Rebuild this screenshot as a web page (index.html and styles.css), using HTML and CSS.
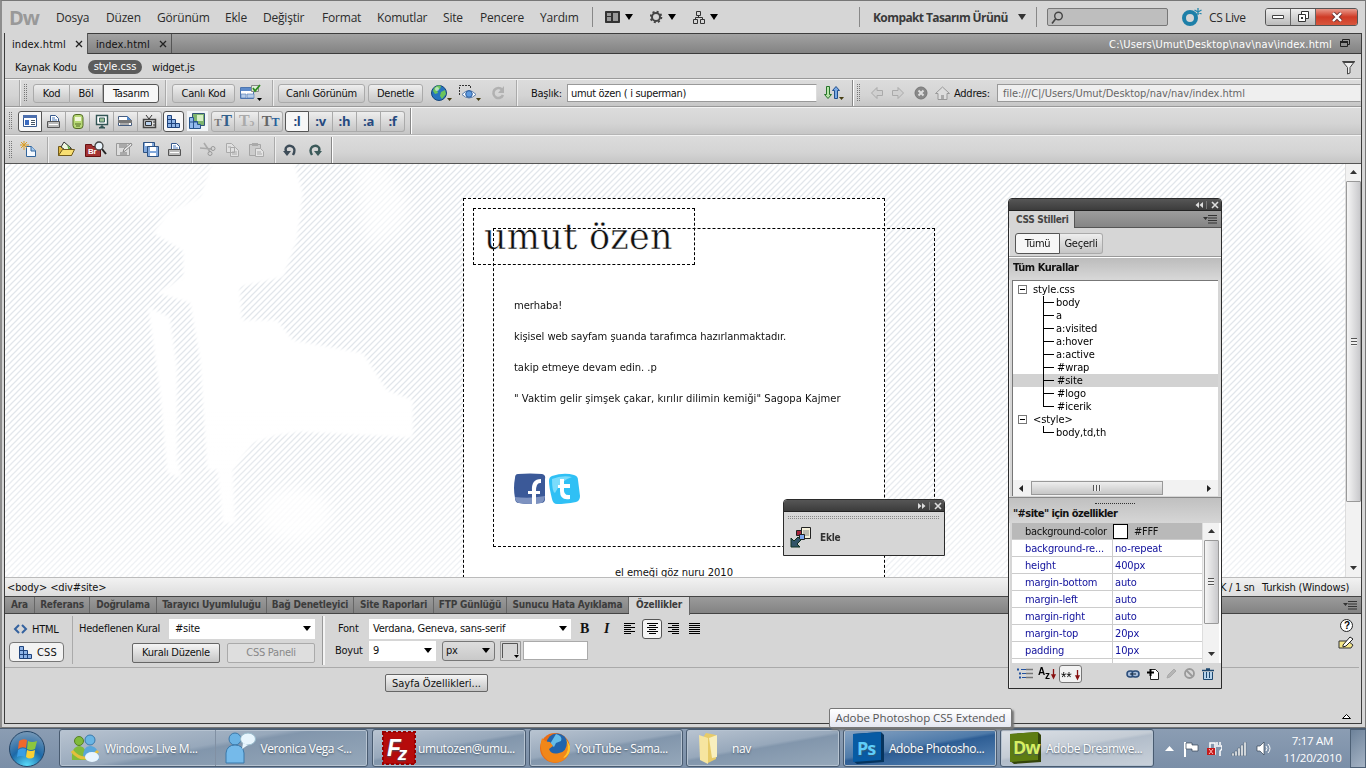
FILE: index.html
```html
<!DOCTYPE html>
<html lang="tr">
<head>
<meta charset="utf-8">
<title>index.html</title>
<link rel="stylesheet" href="styles.css">
</head>
<body>
<svg class="defs" width="0" height="0">
  <defs>
    <symbol id="caret" viewBox="0 0 8 6"><path d="M0 0h8L4 6z"/></symbol>
    <symbol id="menuicon" viewBox="0 0 14 9"><path d="M0 2h5L2.500 5zM5 0h9v1H5zM5 2.500h9v1H5zM5 5h9v1H5zM5 7.500h9v1H5z" fill="#333"/></symbol>
    <symbol id="blocks" viewBox="0 0 13 13"><path d="M.5.500h4v4h4v4h4v4H.5z" fill="#8fb4e6" stroke="#1f437c"/><path d="M.5 4.500h4M.5 8.500h8M4.500 4v8.500M8.500 8v4.500" stroke="#1f437c"/></symbol>
    <symbol id="printer" viewBox="0 0 15 15"><path d="M4.500 7.500v-6h5l3 3v3" fill="#fff" stroke="#37598c"/><path d="M6 4h3M6 6h5" stroke="#4c7dc0"/><path d="M1.500 7.500h12v6h-12z" fill="#bbb" stroke="#555"/><path d="M3 10.500h9" stroke="#fff"/></symbol>
  </defs>
</svg>
<div class="app">
  <header class="menu">
    <b class="dw">Dw</b>
    <span>Dosya</span><span>Düzen</span><span>Görünüm</span><span>Ekle</span><span>Değiştir</span><span>Format</span><span>Komutlar</span><span>Site</span><span>Pencere</span><span>Yardım</span>
    <i class="vline"></i>
    <svg width="29" height="14"><path d="M.5 1.500h14v11H.5z" fill="#333" stroke="#333"/><path d="M2 3h4v3H2zM2 7h4v4H2zM8 3h5v8H8z" fill="#999"/><path d="M20 4h8l-4 6z"/></svg>
    <svg width="28" height="14"><circle cx="6" cy="7" r="4" fill="none" stroke="#444" stroke-width="2"/><circle cx="6" cy="7" r="5.300" fill="none" stroke="#444" stroke-width="2" stroke-dasharray="2 2.160"/><path d="M18 4h8l-4 6z"/></svg>
    <svg width="28" height="14"><path d="M3.500 1.500h4v4h-4zM.5 9.500h4v4h-4zM7.500 9.500h4v4h-4zM5.500 6v2M2.500 9V7.500h7V9" fill="none" stroke="#333"/><path d="M17 4h8l-4 6z"/></svg>
    <i class="vline"></i>
    <b class="workspace">Kompakt Tasarım Ürünü</b>
    <svg width="8" height="6"><use href="#caret" fill="#333"/></svg>
    <i class="vline"></i>
    <div class="search"><svg width="14" height="14"><circle cx="8.500" cy="5" r="3.800" fill="none" stroke="#444" stroke-width="1.400"/><path d="M5.500 8L2 12.500" stroke="#444" stroke-width="1.600"/></svg></div>
    <svg width="21" height="20"><circle cx="8" cy="11" r="6" fill="none" stroke="#1d7fa8" stroke-width="4"/><path d="M16 1v7M12.500 3l7 4M19.500 3l-7 4" stroke="#2387ad" stroke-width="1.300"/></svg>
    <span class="cslive">CS Live</span>
    <div class="winbtns"><i><svg width="12" height="6"><path d="M.5 1.500h11v3H.5z" fill="#fff" stroke="#444"/></svg></i><i><svg width="13" height="12"><path d="M4.500.500h7v7h-7z" fill="#fff" stroke="#333"/><path d="M1.500 3.500h7v7h-7z" fill="#fff" stroke="#333"/><path d="M4 6h2v2H4z" fill="#333"/></svg></i><i><svg width="12" height="10"><path d="M2 1l8 8M10 1L2 9" stroke="#633" stroke-width="4"/><path d="M2 1l8 8M10 1L2 9" stroke="#fff" stroke-width="2.400"/></svg></i></div>
  </header>

  <main class="frame">
    <nav class="filetabs">
      <span class="ftab on">index.html <svg width="8" height="8"><path d="M1 1l6 6M7 1L1 7" stroke="#222" stroke-width="1.300"/></svg></span>
      <span class="ftab">index.html <svg width="8" height="8"><path d="M1 1l6 6M7 1L1 7" stroke="#222" stroke-width="1.300"/></svg></span>
      <span class="filepath">C:\Users\Umut\Desktop\nav\nav\index.html</span>
      <svg width="10" height="10"><path d="M2.500 2V.500h7v5H8M.5 2.500h7v5h-7z" fill="none" stroke="#222"/><path d="M0 2h8v2H0z" fill="#222"/></svg>
    </nav>
    <div class="related"><span>Kaynak Kodu</span><span class="pill">style.css</span><span>widget.js</span>
      <svg width="14" height="15"><path d="M.5 1.500h12L8 7.500V13l-2.500 1V7.500z" fill="#eee" stroke="#444"/><path d="M1 1h12l-1 2H2z" fill="#444"/></svg></div>

    <div class="tb doc">
      <i class="sep"></i><i class="grip"></i>
      <div class="seg views"><span>Kod</span><span>Böl</span><span class="on">Tasarım</span></div>
      <i class="sep"></i><span class="btn b1">Canlı Kod</span>
      <svg width="22" height="18"><path d="M.5 3.500h13v11H.5z" fill="#fff" stroke="#4d76b0"/><path d="M1 4h13v3H1z" fill="#5d8bcb"/><path d="M1 10h5v4H1zM7 10h7v4H7z" fill="#b7cdea" stroke="#4d76b0" stroke-width=".6"/><path d="M11.500 1.500h7v6h-7z" fill="#dfefd9" stroke="#888"/><path d="M13 4l2 3 5-6" fill="none" stroke="#2e8b20" stroke-width="1.800"/><path d="M17 14h5l-2.500 3z"/></svg>
      <i class="sep"></i><span class="btn b2">Canlı Görünüm</span><span class="btn b3">Denetle</span>
      <svg width="21" height="18"><circle cx="8" cy="9" r="7.500" fill="#2674bd" stroke="#17457a"/><path d="M3 4q4-4 7-2l-1 3-3 1 1 3-3 1-2-3zM10 8l4-2 1 4-4 5-2-3z" fill="#6bc45a"/><circle cx="6" cy="5" r="2" fill="#d9f2e6" opacity=".7"/><path d="M16 14h5l-2.500 3z" fill="#443b10"/></svg>
      <svg width="22" height="18"><path d="M.5 11V1.500h11V5" fill="none" stroke="#333" stroke-dasharray="2 1"/><path d="M3 10.500q7-8 14 0-7 7-14 0z" fill="#fff" stroke="#587ba9"/><circle cx="10" cy="10" r="3.300" fill="#5f9be0" stroke="#2c5b98"/><path d="M17 14h5l-2.500 3z" fill="#443b10"/></svg>
      <svg width="14" height="14"><path d="M11 3.500A5 5 0 1 0 12 9" fill="none" stroke="#b1b1b1" stroke-width="2.600"/><path d="M13 0v7H7z" fill="#b1b1b1"/></svg>
      <i class="sep"></i><span class="t">Başlık:</span><span class="field f1">umut özen ( i superman)</span>
      <svg width="20" height="17"><path d="M2.500 1.500h3v8h2L4 13.500.500 9.500h2z" fill="#b8e6a8" stroke="#27732b"/><path d="M10.500 13.500h3v-8h2L12 1.500l-3.500 4h2z" fill="#79a9e5" stroke="#234f8c"/><path d="M15 12h5l-2.500 3z" fill="#443b10"/></svg>
      <i class="sep strong"></i><i class="grip"></i>
      <svg width="14" height="14"><path d="M7 1.500L1.500 7 7 12.500v-3h5.500v-5H7z" fill="#d0d0d0" stroke="#aaa"/></svg>
      <svg width="14" height="14"><path d="M7 1.500L12.500 7 7 12.500v-3H1.500v-5H7z" fill="#d0d0d0" stroke="#aaa"/></svg>
      <svg width="14" height="14"><circle cx="7" cy="7" r="6" fill="#888" stroke="#777"/><path d="M4.500 4.500l5 5M9.500 4.500l-5 5" stroke="#ddd" stroke-width="2"/></svg>
      <svg width="15" height="14"><path d="M.5 7.500L7.500 1l7 6.500H12v6H3v-6z" fill="#ddd" stroke="#999"/><path d="M6 9h3v4H6z" fill="#aaa"/></svg>
      <span class="t">Addres:</span><span class="field f2">file:///C|/Users/Umut/Desktop/nav/nav/index.html</span>
    </div>

    <div class="tb style">
      <i class="grip"></i>
      <div class="seg icons six">
        <span class="on"><svg width="16" height="14"><path d="M1.500 1.500h13v11h-13z" fill="#fff" stroke="#36598f"/><path d="M1 1h14v3H1z" fill="#4c6fae"/><path d="M3 6h4v5H3z" fill="#3a6bc0"/><path d="M9 6.500h4M9 8.500h4M9 10.500h4" stroke="#456"/></svg></span>
        <span><svg width="15" height="15"><use href="#printer"/></svg></span>
        <span><svg width="12" height="15"><rect x="1" y=".5" width="10" height="14" rx="3" fill="#b8d977" stroke="#526b25"/><path d="M3 3h6v4H3z" fill="#f1f7db"/><path d="M3 10h6M4 12h4" stroke="#526b25"/></svg></span>
        <span><svg width="14" height="15"><path d="M1.500 1.500h11v9h-11z" fill="#fff" stroke="#355" stroke-width="1.400"/><path d="M4.500 4h5v4h-5z" fill="#9dc295" stroke="#3e6964"/><path d="M7 10v2M4 14l3-2 3 2z" stroke="#355" fill="#355"/></svg></span>
        <span><svg width="15" height="12"><path d="M.5 4.500V1.500h9l4 4v5H.5z" fill="#fff" stroke="#445c80"/><path d="M0 5h14v3H0z" fill="#777"/><path d="M9 1v4h4z" fill="#518bd0"/><path d="M2 9h9" stroke="#555"/></svg></span>
        <span><svg width="15" height="15"><path d="M1.500 5.500h12v8h-12z" fill="#ddd" stroke="#444" stroke-width="1.500"/><path d="M3.500 7.500h6v4h-6z" fill="#b9d1ee" stroke="#333"/><path d="M7 5L4 1M7 5l3-4M11 8h2M11 11h2" stroke="#333"/></svg></span>
      </div>
      <div class="seg icons one"><span class="on"><svg width="13" height="13"><use href="#blocks"/></svg></span></div>
      <svg width="21" height="20"><path d="M0 0h21v20H0z" fill="#f2f5f7"/><path d="M5.500 2.500h12v12h-12z" fill="#7db56e" stroke="#357"/><path d="M10 4h6v6h-6z" fill="#d7efc5"/><path d="M2.500 6.500h4v4h4v3h3v4h-11z" fill="#92b9ec" stroke="#27558c"/><path d="M6.500 7v10M3 11h7" stroke="#27558c"/></svg>
      <div class="seg icons three"><span><b class="t1"><small>T</small>T</b></span><span><b class="t2">T<small>ɔ</small></b></span><span><b class="t3">T<small>T</small></b></span></div>
      <div class="seg icons five"><span class="on">:l</span><span>:v</span><span>:h</span><span>:a</span><span>:f</span></div>
      <i class="sep strong"></i>
    </div>

    <div class="tb std">
      <i class="grip"></i>
      <svg width="17" height="17"><path d="M6.500 5.500h5l4 4v6h-9z" fill="#f4f9ff" stroke="#31649b"/><path d="M11 5v5h5" fill="#a8caee" stroke="#31649b"/><path d="M4 0v9M0 4h9M1 1l6 6M7 1L1 7" stroke="#d99c25"/></svg>
      <i class="sep"></i>
      <svg width="19" height="17"><path d="M1.500 14.500v-9h4l1 2h8v7z" fill="#e2b83d" stroke="#705a1b"/><path d="M7 1l7 6-3 4-7-5z" fill="#eef6df" stroke="#333"/><path d="M10 3l5 7-3 1z" fill="#58aa45"/><path d="M1.500 14.500l4-6h12l-3 6z" fill="#f8df72" stroke="#705a1b"/></svg>
      <svg width="22" height="17"><path d="M.5 3.500h6l1 2h8v10H.5z" fill="#a33131" stroke="#611"/><text x="3" y="13" class="br">Br</text><circle cx="14" cy="5" r="4" fill="#e8f4fc" stroke="#444" stroke-width="1.300"/><path d="M17 8l4 5" stroke="#222" stroke-width="2"/></svg>
      <svg width="18" height="15"><path d="M1.500 1.500h13v12h-13z" fill="#ddd" stroke="#999"/><path d="M4 2h8v4H4zM5 10h7v3H5z" fill="#aaa"/><path d="M8 10l1-3 7-6 1 2-7 6z" fill="#eee" stroke="#888"/></svg>
      <svg width="18" height="17"><path d="M1.500 1.500h11v10h-11z" fill="#82a9dc" stroke="#2d5283"/><path d="M3 2h7v3H3z" fill="#fff"/><path d="M5.500 5.500h11v10h-11z" fill="#82a9dc" stroke="#2d5283"/><path d="M8 6h6v4H8zM8 12h6v3H8z" fill="#fff"/></svg>
      <svg width="15" height="15"><use href="#printer"/></svg>
      <i class="sep"></i>
      <svg width="17" height="15"><path d="M5 1l6 9M1 6l12 1" stroke="#aaa" stroke-width="1.600"/><circle cx="14" cy="6.500" r="2" fill="none" stroke="#999"/><circle cx="11" cy="11.500" r="2" fill="none" stroke="#999"/></svg>
      <svg width="15" height="16"><path d="M1.500 1.500h5l3 3v6h-8zM5.500 5.500h5l3 3v6h-8z" fill="#e1e1e1" stroke="#aaa"/><path d="M7 10h5M7 12h5M3 5h3" stroke="#aaa"/></svg>
      <svg width="17" height="16"><path d="M1.500 2.500h11v11h-11z" fill="#ccc" stroke="#a5a5a5"/><path d="M4 1h6v3H4z" fill="#aaa"/><path d="M7.500 6.500h5l3 3v5h-8z" fill="#e4e4e4" stroke="#aaa"/><path d="M9 10h4M9 12h5" stroke="#aaa"/></svg>
      <i class="sep"></i>
      <svg width="16" height="14"><path d="M5 10C1 4 7 1 11 4q3 3 0 8" fill="none" stroke="#3d4c58" stroke-width="2.400"/><path d="M1 8h8l-4 5z" fill="#3d4c58"/></svg>
      <svg width="16" height="14"><path d="M10 10C14 4 8 1 4 4q-3 3 0 8" fill="none" stroke="#3c5a5a" stroke-width="2.400"/><path d="M6 8h8l-4 5z" fill="#3c5a5a"/></svg>
      <i class="sep strong"></i>
    </div>

    <section class="docarea">
      <div class="canvas">
        <svg class="pattern" width="1340" height="413">
          <defs>
            <pattern id="stripes" width="6" height="6" patternUnits="userSpaceOnUse"><path d="M-1 7L7-1M-1 1L1-1M5 7L7 5" stroke="#e2e6eb" stroke-width="1.300"/></pattern>
            <linearGradient id="fade" x2="0" y2="1"><stop offset=".6" stop-color="#fff" stop-opacity="0"/><stop offset="1" stop-color="#fff" stop-opacity=".5"/></linearGradient>
            <filter id="soft"><feGaussianBlur stdDeviation="1.500"/></filter>
            <filter id="softer"><feGaussianBlur stdDeviation="7"/></filter>
          </defs>
          <rect width="1340" height="413" fill="url(#stripes)"/>
          <g fill="#fff" filter="url(#soft)">
            <path d="M208-5L195 33 162 49 148 69 178 87 178 113 152 129 185 139 195 196 202 306H228L248 279 270 272 295 268 408 274V236L382 226 358 189 288 176 272 156H237L235 123 278 113 292 76 298 29 288-5z"/>
            <path d="M143 143L165 153 172 203V296L177 314 162 309 155 229z"/>
            <path d="M212 304H228L230 359H218z"/>
          </g>
          <g fill="#fff" filter="url(#softer)">
            <path d="M75-3H205L190 40 150 50 95 35z" opacity=".6"/>
            <path d="M350-2h30l25 45-10 25-30 15-8-20z" opacity=".6"/>
            <ellipse cx="290" cy="350" rx="36" ry="26" opacity=".8"/>
            <path d="M1290 0h50v130l-20-30-30-30z" opacity=".5"/>
          </g>
          <rect width="1340" height="413" fill="url(#fade)"/>
        </svg>
        <div class="site"><div class="credit">el emeği göz nuru 2010</div></div>
        <div class="logo">umut özen</div>
        <div class="icerik">
          <p>merhaba!</p><p>kişisel web sayfam şuanda tarafımca hazırlanmaktadır.</p><p>takip etmeye devam edin. .p</p><p class="quote">" Vaktim gelir şimşek çakar, kırılır dilimin kemiği" Sagopa Kajmer</p>
          <div class="social">
            <svg width="32" height="32"><path d="M4 1q12-1 24 0 4 1 3 5v20q0 4-4 4-12 2-22 0-4 0-4-5-2-10 0-20 0-4 3-4z" fill="#3b5998"/><path d="M1 24q15 2 30-1-1 7-4 7-12 2-22 0-4-1-4-6z" fill="#7d92c0"/><path d="M18 31V21h-4v-3h4q-1-12 9-12v4q-5-1-5 8h4v3h-4v10z" fill="#fff"/></svg>
            <svg width="32" height="32"><path d="M3 3q12-4 22-1 4 1 4 5l2 16q0 5-4 6-11 2-19 2-4 0-5-5Q0 14 0 8q0-4 3-5z" fill="#2fc0f5"/><path d="M3 6q10-4 20-2Q12 7 6 20q-3-1-3-14z" fill="#7bdcfb"/><path d="M11 6h4v5h6v4h-6q-1 8 6 7v4q-10 2-10-8v-3H9v-3h2z" fill="#fff"/></svg>
          </div>
        </div>
      </div>
      <div class="vscroll"><svg width="7" height="5"><path d="M0 4h7L3.500 0z" fill="#333"/></svg><i><b></b></i><svg width="7" height="5"><path d="M0 0h7L3.500 4z" fill="#333"/></svg></div>
    </section>

    <div class="status"><span class="tags">&lt;body&gt; &lt;div#site&gt;</span><span class="sn">K / 1 sn</span><span class="lang">Turkish (Windows)</span></div>
    <nav class="ptabs"><b>Ara</b><b>Referans</b><b>Doğrulama</b><b>Tarayıcı Uyumluluğu</b><b>Bağ Denetleyici</b><b>Site Raporlari</b><b>FTP Günlüğü</b><b>Sunucu Hata Ayıklama</b><b class="on">Özellikler</b><svg width="14" height="9"><use href="#menuicon"/></svg></nav>

    <section class="props">
      <div class="ptop">
        <div class="modes"><span><svg width="15" height="10"><path d="M6 1L2 5l4 4M9 1l4 4-4 4" fill="none" stroke="#34629f" stroke-width="2"/></svg>HTML</span><span class="on"><svg width="13" height="13"><use href="#blocks"/></svg>CSS</span></div>
        <div class="rule">
          <div class="line"><label>Hedeflenen Kural</label><span class="select rs">#site<svg width="8" height="5"><path d="M0 0h8L4 5z"/></svg></span></div>
          <div class="line right"><span class="push">Kuralı Düzenle</span><span class="push off">CSS Paneli</span></div>
        </div>
        <div class="fonts">
          <div class="line"><label class="fl">Font</label><span class="select fs">Verdana, Geneva, sans-serif<svg width="8" height="5"><path d="M0 0h8L4 5z"/></svg></span>
            <b class="bold">B</b><b class="ital">I</b>
            <span class="al"><svg width="11" height="11"><path d="M0 .5h11M0 2.500h7M0 4.500h11M0 6.500h7M0 8.500h11M0 10.500h7" stroke="#000"/></svg></span><span class="al on"><svg width="11" height="11"><path d="M0 .5h11M2 2.500h7M0 4.500h11M2 6.500h7M0 8.500h11M2 10.500h7" stroke="#000"/></svg></span><span class="al"><svg width="11" height="11"><path d="M0 .5h11M4 2.500h7M0 4.500h11M4 6.500h7M0 8.500h11M4 10.500h7" stroke="#000"/></svg></span><span class="al"><svg width="11" height="11"><path d="M0 .5h11M0 2.500h11M0 4.500h11M0 6.500h11M0 8.500h11M0 10.500h11" stroke="#000"/></svg></span></div>
          <div class="line"><label class="fl sz">Boyut</label><span class="select ss">9<svg width="8" height="5"><path d="M0 0h8L4 5z"/></svg></span><span class="unit">px<svg width="8" height="5"><path d="M0 0h8L4 5z"/></svg></span><svg class="swatch" width="21" height="20"><path d="M.5.500h20v19H.5z" fill="#d6d6d6" stroke="#999"/><path d="M2.500 17V2.500h15V13" fill="none" stroke="#555"/><path d="M14 14h5l-2.500 3z"/></svg><span class="colorin"></span></div>
        </div>
        <div class="help"><svg width="13" height="13"><circle cx="6.500" cy="6.500" r="6" fill="#fff" stroke="#222"/><text x="4" y="10" class="q">?</text></svg>
        <svg width="16" height="13"><path d="M1 5h9l5 4-2 3H1z" fill="#f3e688" stroke="#333"/><path d="M5 9l7-8 3 2-7 7-3 1z" fill="#fff" stroke="#222"/></svg></div>
      </div>
      <div class="pbot"><span class="push page">Sayfa Özellikleri...</span><svg width="9" height="5"><path d="M.5 4.500h8L4.500.500z" fill="#fff" stroke="#000"/></svg></div>
    </section>
  </main>

  <aside class="insert">
    <div class="ptitle"><svg width="26" height="8"><path d="M1 1l3.500 3L1 7zM5 1l3.500 3L5 7z" fill="#ddd"/><path d="M12.500 0v8" stroke="#777"/><path d="M18 1l6 6M24 1l-6 6" stroke="#ddd" stroke-width="1.600"/></svg></div>
    <i class="dots"></i>
    <div class="irow"><svg width="22" height="22"><path d="M11.500 1.500h9v11h-9z" fill="#f4f0da" stroke="#222"/><path d="M13 5h6M13 7h6M13 9h6" stroke="#888"/><path d="M6.500 4.500h5v5h-5z" fill="#a52339" stroke="#222"/><path d="M9.500 8.500h5v5h-5z" fill="#7ea7ef" stroke="#222"/><path d="M1 12v9h9l-3-3 4-4-3-3-4 4z" fill="#315469" stroke="#132"/></svg><b>Ekle</b></div>
  </aside>

  <aside class="css">
    <div class="ptitle"><svg width="26" height="8"><path d="M5 1L1.500 4 5 7zM9 1L5.500 4 9 7z" fill="#ddd"/><path d="M12.500 0v8" stroke="#777"/><path d="M18 1l6 6M24 1l-6 6" stroke="#ddd" stroke-width="1.600"/></svg></div>
    <div class="ctab"><b>CSS Stilleri</b><svg width="14" height="9"><use href="#menuicon"/></svg></div>
    <div class="cmode"><div class="seg"><span class="on">Tümü</span><span>Geçerli</span></div></div>
    <b class="chead">Tüm Kurallar</b>
    <div class="tree">
      <div class="root"><i></i>style.css</div>
      <div class="leaf">body</div><div class="leaf">a</div><div class="leaf">a:visited</div><div class="leaf">a:hover</div><div class="leaf">a:active</div><div class="leaf h">#wrap</div><div class="leaf h sel">#site</div><div class="leaf h">#logo</div><div class="leaf h last">#icerik</div>
      <div class="root"><i></i>&lt;style&gt;</div>
      <div class="leaf last">body,td,th</div>
      <div class="hscroll"><svg width="4" height="7"><path d="M4 0v7L0 3.500z" fill="#222"/></svg><i><b></b></i><svg width="4" height="7"><path d="M0 0v7l4-3.500z" fill="#222"/></svg></div>
    </div>
    <div class="chead2"><i></i><b>"#site" için özellikler</b></div>
    <div class="ptable">
      <div class="rows">
        <div class="row sel"><span>background-color</span><span><i class="sw"></i>#FFF</span></div>
        <div class="row"><span>background-re...</span><span>no-repeat</span></div>
        <div class="row"><span>height</span><span>400px</span></div>
        <div class="row"><span>margin-bottom</span><span>auto</span></div>
        <div class="row"><span>margin-left</span><span>auto</span></div>
        <div class="row"><span>margin-right</span><span>auto</span></div>
        <div class="row"><span>margin-top</span><span>20px</span></div>
        <div class="row"><span>padding</span><span>10px</span></div>
        <div class="row"><span>width</span><span></span></div>
      </div>
      <div class="vscroll small"><svg width="7" height="5"><path d="M0 4h7L3.500 0z" fill="#333"/></svg><i><b></b></i><svg width="7" height="5"><path d="M0 0h7L3.500 4z" fill="#333"/></svg></div>
    </div>
    <div class="cfoot">
      <svg width="16" height="11"><path d="M0 1.500h2M2 5.500h2M2 9.500h2" stroke="#2353a0" stroke-width="2"/><path d="M4 1.500h5M5 5.500h4M5 9.500h4" stroke="#2353a0"/><path d="M9 1.500h7M9 5.500h7M9 9.500h7" stroke="#777" stroke-width="1.500"/></svg>
      <svg width="19" height="14"><text x="0" y="8" class="az">A<tspan dy="4">z</tspan></text><path d="M15.500 2v6M14 8l1.500 3L17 8z" stroke="#811" stroke-width="1.300" fill="#811"/></svg>
      <span class="stars"><svg width="20" height="14"><text x="0" y="14" class="ast">**</text><path d="M16.500 2v6M15 8l1.500 3L18 8z" stroke="#811" stroke-width="1.300" fill="#811"/></svg></span>
      <svg width="14" height="8"><rect x="1" y="1" width="7" height="6" rx="3" fill="#a7bddb" stroke="#294b78" stroke-width="1.500"/><rect x="6" y="1" width="7" height="6" rx="3" fill="#a7bddb" stroke="#294b78" stroke-width="1.500"/><path d="M4 4h6" stroke="#123"/></svg>
      <svg width="12" height="12"><path d="M3.500 1.500h5l3 3v7h-8z" fill="#fff" stroke="#222"/><path d="M0 4.500h7M3.500 1v7" stroke="#000" stroke-width="2"/></svg>
      <svg width="11" height="11"><path d="M1 10l1-3 6-6 2 2-6 6z" fill="#b5b5b5" stroke="#aaa"/></svg>
      <svg width="11" height="11"><circle cx="5.500" cy="5.500" r="4.500" fill="none" stroke="#999" stroke-width="1.800"/><path d="M2.500 2.500l6 6" stroke="#999" stroke-width="1.800"/></svg>
      <svg width="12" height="12"><path d="M0 2.500h12M4 1h4" stroke="#1e486f" stroke-width="1.600"/><path d="M1.500 4v7.500h9V4M4.500 4v6M7.500 4v6" fill="#b7d4ec" stroke="#1e486f"/></svg>
    </div>
  </aside>
  <div class="tooltip">Adobe Photoshop CS5 Extended</div>
</div>

<footer class="taskbar">
  <svg width="38" height="38"><defs><radialGradient id="orb" cx=".5" cy="1" r="1"><stop offset="0" stop-color="#5be2ff"/><stop offset=".5" stop-color="#1d69a8"/><stop offset="1" stop-color="#7899b7"/></radialGradient></defs><circle cx="18" cy="20" r="17.500" fill="url(#orb)" stroke="#244567"/><path d="M10 12q4-3 8-1l-1 8q-4-2-8 1z" fill="#ef682c"/><path d="M19 12q4 2 9 0l-2 8q-4 2-8 0z" fill="#8cc63e"/><path d="M9 21q4-3 8-1l-1 8q-4-2-8 0z" fill="#3a9ee4"/><path d="M18 21q4 2 8 0l-1 7q-4 3-8 0z" fill="#fbd034"/></svg>
  <div class="task dbl"><div><svg width="30" height="34"><circle cx="8" cy="10" r="4.500" fill="#80bb3c" stroke="#557f25"/><circle cx="19" cy="9" r="5" fill="#69b5e4" stroke="#3b79aa"/><path d="M1 29q-1-14 8-14 7 1 7 14z" fill="#80bb3c"/><path d="M12 27q0-13 8-12 8 1 8 14z" fill="#58a6db"/><path d="M1 20q12 14 26 0" fill="none" stroke="#e4bf3c" stroke-width="3"/><ellipse cx="21" cy="26" rx="7" ry="5" fill="#e7f5ff"/></svg>Windows Live M...</div><div class="vero"><svg width="34" height="34"><circle cx="12" cy="8" r="6" fill="#6bb3e4" stroke="#3b79aa"/><path d="M3 32V22q1-8 9-8t9 8v10z" fill="#75baea" stroke="#3b79aa"/><ellipse cx="25" cy="8" rx="7.500" ry="6" fill="#e8f5fd" stroke="#9bc"/><path d="M20 12l-1 6 6-4z" fill="#e8f5fd"/></svg>Veronica Vega &lt;...</div></div>
  <div class="task fzt"><svg width="34" height="34"><path d="M1 1h32v32H1z" fill="#b60b0b" stroke="#900" stroke-width="2" stroke-dasharray="3 2"/><text x="5" y="25" class="fz">F<tspan class="fz2" dy="4" dx="-3">z</tspan></text></svg>umutozen@umu...</div>
  <div class="task"><svg width="32" height="34"><circle cx="16" cy="17" r="15" fill="#e96d16"/><circle cx="18" cy="13" r="10.500" fill="#2164ad"/><path d="M17 3q7 2 5 7l-5 2-2 4-4-3z" fill="#65bce8"/><path d="M3 7q3 4 8 4l3 4-4 3q2 6 10 4 8-1 8-12 6 14-5 20-12 5-19-6Q0 16 3 7z" fill="#f18719"/><path d="M27 8q5 12-3 19 8-2 7-12z" fill="#ffc52e"/></svg>YouTube - Sama...</div>
  <div class="task"><svg width="32" height="34"><path d="M10 2l10 2v24l-8 4-4-3V5z" fill="#e7cb68"/><path d="M3 4l9 3v26l-8-4z" fill="#f6e5a0"/><path d="M13 7l8-3v22l-5 1z" fill="#f8efbe"/></svg>nav</div>
  <div class="task blue"><svg width="32" height="34"><path d="M0 3l28-2 3 3v27l-27 2-4-3z" fill="#06345e"/><path d="M0 3l28-2v28L0 31z" fill="#075ba4"/><text x="4" y="24" class="app ps">Ps</text></svg>Adobe Photosho...</div>
  <div class="task light"><svg width="32" height="34"><path d="M0 3l28-2 3 3v27l-27 2-4-3z" fill="#34440b"/><path d="M0 3l28-2v28L0 31z" fill="#5e7d12"/><text x="3" y="23" class="app dwt">Dw</text></svg>Adobe Dreamwe...</div>
  <div class="tray">
    <svg width="9" height="5"><path d="M0 5h9L4.500 0z" fill="#fff"/></svg>
    <svg width="16" height="16"><path d="M2 1v15" stroke="#fff" stroke-width="2"/><path d="M3 2h6v2h6v6H9V8H3z" fill="#fff" stroke="#345" stroke-width=".7"/></svg>
    <svg width="15" height="17"><path d="M3 3h5v11H3zM10 2v3M13 2v3M9 6h6v3l-2 2v5" fill="none" stroke="#fff" stroke-width="1.500"/><path d="M0 8h8v7H0z" fill="#c61a1a"/><path d="M2 9l4 5M6 9l-4 5" stroke="#fbb"/></svg>
    <svg width="16" height="14"><path d="M1 14v-3h2v3zM4 14V9h2v5zM7 14V6h2v8zM10 14V3h2v11zM13 14V0h2v14z" fill="#fff" stroke="#456" stroke-width=".5"/></svg>
    <svg width="16" height="15"><path d="M1 5h3l4-4v13l-4-4H1z" fill="#fff" stroke="#345" stroke-width=".7"/><path d="M10 5q2 2.500 0 5M12 3q4 4.500 0 9" fill="none" stroke="#fff"/></svg>
    <div class="clock">7:17 AM<br>11/20/2010</div>
  </div>
  <i class="desk"></i>
</footer>
</body>
</html>
```
FILE: styles.css
```css
*{box-sizing:border-box}
body{margin:0;width:1366px;height:768px;overflow:hidden;background:#d6d6d6;color:#111;font:11px/13px "DejaVu Sans Condensed","DejaVu Sans",sans-serif;font-stretch:condensed;letter-spacing:-.25px;white-space:nowrap}
svg{display:block;flex:none}
svg.defs{position:absolute}
i{font-style:normal;display:block}
.app{position:relative;height:728px;border:1px solid #777;border-width:1px 1px 1px 2px;border-left-color:#8d8d8d;background:#d6d6d6}
.menu{display:grid;height:32px;padding-left:7px;align-items:center;grid-template-columns:47px 50px 51px 68px 38px 59px 55px 66px 37px 60px 52px 13px 45px 43px 166px 14px 145px 18px 11px 135px 27px 56px 93px;font:12px "Open Sans",sans-serif;letter-spacing:-.2px;color:#2b2b2b}
.dw{font:bold 20px "Open Sans",sans-serif;color:#999;letter-spacing:-1px}
.vline{width:1px;height:20px;background:#888}
.workspace{letter-spacing:-.6px;color:#3a3a3a}
.search{width:121px;height:18px;border:1px solid #777;background:#bebebe;border-radius:2px;padding:2px}
.cslive{letter-spacing:-.4px}
.winbtns{display:flex;width:93px;height:18px;border:1px solid #555;border-radius:3px;overflow:hidden}
.winbtns i{display:flex;align-items:center;justify-content:center;width:25px;background:linear-gradient(#eee,#bbb);border-right:1px solid #666}
.winbtns i:last-child{flex:1;border:0;background:linear-gradient(#e99a8c,#cf3b26 50%,#d8563d)}
.frame{display:flex;flex-direction:column;margin:0 3px 0 2px;height:691px;border:1px solid #3c3c3c;border-top:0}
.filetabs{display:flex;align-items:center;height:21px;background:linear-gradient(#a2a2a2,#838383);border:solid #3c3c3c;border-width:1px 0;flex:none}
.ftab{display:flex;align-items:center;gap:9px;width:84px;height:19px;padding:1px 0 0 8px;border-right:1px solid #555;letter-spacing:.1px;flex:none}
.ftab.on{height:21px;width:83px;padding-left:7px;background:#d6d6d6}
.filepath{margin:1px 8px 0 auto;color:#fff;letter-spacing:.2px}
.filetabs>svg{margin-right:11px}
.related{display:grid;grid-template-columns:73px 64px 1fr 19px;align-items:center;height:25px;padding:2px 0 0 10px;border-bottom:1px solid #999;letter-spacing:-.2px;flex:none}
.related .pill{width:54px;height:14px;border-radius:7px;background:#5c5c5c;color:#fff;text-align:center;letter-spacing:0}
.tb{display:grid;align-items:center;height:28px;background:linear-gradient(#dcdcdc,#d4d4d4 60%,#c6c6c6);border-top:1px solid #f3f3f3;border-bottom:1px solid #999;flex:none}
.doc{padding:0 0 2px 14px;grid-template-columns:5px 9px 132px 7px 68px 32px 6px 90px 63px 28px 32px 25px 15px 36px 257px 28px 5px 13px 21px 23px 21px 19px 43px 364px}
.style,.std{height:28px;padding-left:4px;border-bottom-color:#b5b5b5}
.style{grid-template-columns:9px 145px 24px 24px 74px 125px 2px}
.std{height:29px;grid-template-columns:11px 27px 10px 28px 30px 27px 25px 24px 8px 26px 23px 26px 8px 26px 23px 2px;border-bottom:1px solid #555}
.sep{width:2px;height:26px;background:#aaa;border-right:1px solid #eee}
.sep.strong{background:#888;border-right-color:#fff}
.grip{width:4px;height:18px;background:radial-gradient(circle at .5px .5px,#777 .6px,transparent .8px) 0 0/2px 2px}
.seg{display:flex;height:19px}
.seg span,.btn{display:flex;align-items:center;justify-content:center;height:19px;border:1px solid #aaa;background:linear-gradient(#eee,#c6c6c6)}
.seg span+span{border-left:0}
.seg span:first-child{border-radius:3px 0 0 3px}
.seg span:last-child{border-radius:0 3px 3px 0}
.seg span.on{background:#f7f7f7;border:1px solid #555}
.views span:nth-child(1){width:37px}.views span:nth-child(2){width:33px}.views span:nth-child(3){width:56px}
.btn{border-radius:3px;font-size:11px}
.b1{width:63px}.b2{width:87px}.b3{width:55px}
.field{height:18px;border:1px solid #999;border-right-color:#ddd;background:#fff;padding:2px 3px;letter-spacing:-.32px}
.f2{width:364px;background:#efefef;color:#666;padding-left:5px;letter-spacing:-.03px}
.f1{width:250px}
.icons,.icons span{height:21px}
.icons span{width:24px}
.one{width:22px}.one .on{width:21px;border-radius:3px!important}
.five{font:bold 13px "Open Sans",sans-serif;color:#25497f}
.five span{padding-bottom:1px}
.three b{font:bold 16px "Liberation Serif",serif;color:#34618b}
.three small{font-size:11px;color:#777}
.three .t2{color:#aaa}.three .t2 small{color:#aaa}.three .t3{font-size:15px;color:#666}.three .t3 small{color:#285f9c;font-size:12px}
.br{font:bold 8px "Liberation Sans",sans-serif;fill:#fff}
.docarea{display:flex;height:414px;flex:none;border-bottom:1px solid #bbb}
.canvas{position:relative;width:1340px;height:413px;overflow:hidden;background:#fff}
.pattern{position:absolute;left:0;top:0}
.site,.logo,.icerik{position:absolute;border:1px dashed #000}
.site{left:458px;top:34px;width:422px;height:400px;background:#fff;font:10px/13px "DejaVu Sans",sans-serif;letter-spacing:-.05px}
.credit{margin-top:367px;text-align:center}
.logo{left:468px;top:44px;width:222px;height:57px;padding:6px 0 0 10px;font:35px/44px "DejaVu Serif",serif;-webkit-text-stroke:.45px #fff;letter-spacing:.3px}
.icerik{left:488px;top:64px;width:442px;height:319px;padding:70px 20px 0;font:10px/13px "DejaVu Sans",sans-serif;letter-spacing:-.06px}
.icerik p{margin:0 0 18px}
.icerik .quote{letter-spacing:.03px}
.social{display:flex;gap:3px;margin-top:68px}
.vscroll{display:flex;flex-direction:column;align-items:center;width:16px;height:413px;padding:6px 0 6px;background:#f2f2f2;border-left:1px solid #ddd}
.vscroll i{display:flex;align-items:center;justify-content:center;width:15px;height:321px;margin:6px 0 auto;border:1px solid #999;border-radius:1px;background:linear-gradient(90deg,#f5f5f5,#c9c9cc)}
.vscroll i b{width:6px;height:8px;background:repeating-linear-gradient(#555 0 1px,#eee 1px 3px)}
.status{display:grid;grid-template-columns:1213px 42px 1fr;align-items:center;height:18px;padding-left:2px;background:linear-gradient(#f2f2f2,#ddd);letter-spacing:-.15px;flex:none}
.status .sn{letter-spacing:-.3px}
.status .lang{letter-spacing:-.15px}
.ptabs{display:flex;align-items:stretch;height:18px;border:solid #444;border-width:1px 0;background:linear-gradient(#9b9b9b,#838383);font-size:10px;line-height:16px;color:#3c3c3c;text-align:center;letter-spacing:-.2px;flex:none}
.ptabs b{border-right:1px solid #666}
.ptabs b:nth-child(1){width:30px}.ptabs b:nth-child(2){width:55px}.ptabs b:nth-child(3){width:67px}.ptabs b:nth-child(4){width:110px}.ptabs b:nth-child(5){width:87px}.ptabs b:nth-child(6){width:80px}.ptabs b:nth-child(7){width:73px}.ptabs b:nth-child(8){width:122px}.ptabs b:nth-child(9){width:61px}
.ptabs .on{background:#d6d6d6;height:18px}
.ptabs svg{margin:4px 4px 0 auto}
.props{flex:1}
.ptop{display:flex;height:54px;border-bottom:1px solid #aaa;margin-right:2px}
.modes{width:68px;height:48px;margin-top:2px;padding:3px 0 0 4px;border-right:1px solid #aaa}
.modes span{display:flex;align-items:center;gap:4px;width:55px;height:20px;padding-left:4px}
.modes .on{margin-top:3px;padding-left:9px;gap:5px;border:1px solid #777;border-radius:4px;background:#f3f3f3;letter-spacing:.1px}
.rule{width:252px;height:49px;margin-top:2px;padding:2px 8px 0 6px;border-right:2px solid #f4f4f4;box-shadow:inset -1px 0 #999}
.line{display:flex;align-items:center;height:21px}
.rule .line label{width:90px}
.line.right{margin-top:3px;justify-content:flex-end;gap:7px}
.select{display:flex;align-items:center;justify-content:space-between;height:20px;background:#fff;padding:0 4px 0 6px}
.rs{width:146px}.fs{width:202px;padding-left:4px}.ss{width:67px;padding-left:4px;margin-left:0}
.push{display:flex;align-items:center;justify-content:center;width:88px;height:20px;border:1px solid #666;border-radius:2px;background:linear-gradient(#f5f5f5,#c5c5c5)}
.push.off{border-color:#aaa;color:#888;background:#dedede}
.fonts{padding:4px 0 0 10px}
.fonts .line{height:21px}.fonts .line+.line{margin-top:1px}
.fl{width:31px;margin-left:3px}.fl.sz{width:34px;margin-left:0}
.bold,.ital{width:12px;margin-left:9px;font:bold 14px "Liberation Serif",serif}.ital{margin-left:12px;font-style:italic}
.al{display:flex;align-items:center;justify-content:center;width:20px;height:20px;margin-right:1px;border:1px solid transparent}
.ital+.al{margin:0 3px 0 3px}
.al.on{border-color:#555;border-radius:3px;background:#f5f5f5}
.unit{display:flex;align-items:center;justify-content:space-between;width:53px;height:20px;margin:0 5px 0 6px;padding:0 4px 0 3px;border:1px solid #777;border-radius:3px;background:linear-gradient(#ddd,#c9c9c9)}
.colorin{width:65px;height:19px;margin-left:2px;border:1px solid #aaa;background:#fff}
.help{margin:5px 5px 0 auto;display:flex;flex-direction:column;gap:4px;align-items:center}
.q{font:bold 10px "Liberation Sans",sans-serif}
.pbot{display:flex;height:53px;justify-content:space-between;padding:6px 10px 0 380px}
.page{width:103px;height:18px;letter-spacing:0}
.pbot svg{margin-top:40px}
.insert,.css{position:absolute;border:1px solid #2b2b2b;border-radius:4px 4px 0 0;background:#d6d6d6;overflow:hidden}
.insert{left:781px;top:498px;width:162px;height:57px}
.ptitle{display:flex;align-items:center;justify-content:flex-end;height:12px;padding-right:1px;background:linear-gradient(#565656,#3c3c3c);border-bottom:1px solid #222}
.dots{height:4px;margin:4px 4px 0;background:radial-gradient(circle at .5px .5px,#888 .6px,transparent .8px) 0 0/2px 2px}
.irow{display:flex;align-items:center;gap:8px;height:34px;padding-left:6px;font-size:10px;letter-spacing:-.2px;color:#333}
.css{left:1006px;top:197px;width:214px;height:491px;display:flex;flex-direction:column;box-shadow:inset 1px 0 #eee}
.css>.ptitle{flex:none}
.ctab{display:flex;justify-content:space-between;align-items:center;height:17px;border-bottom:1px solid #555;background:linear-gradient(#9d9d9d,#858585);font-size:10px;padding-right:4px;letter-spacing:0;flex:none}
.ctab b{height:17px;width:66px;padding:2px 7px 0;border-right:1px solid #555;background:#d6d6d6;color:#444;letter-spacing:-.3px}
.cmode{height:29px;padding:5px 6px;border-bottom:1px solid #999;flex:none}
.cmode .seg,.cmode .seg span{height:21px}
.cmode span{width:43px}.cmode span.on{width:45px}
.chead{height:23px;padding:3px 4px;border-top:1px solid #fff;background:linear-gradient(#bcbcbc,#d8d8d8);font-size:11px;letter-spacing:-.45px;flex:none}
.tree{display:flex;flex-direction:column;height:216px;margin:0 3px;padding-top:2px;border:solid #777;border-width:1px 0 0 1px;background:#fff;color:#000;letter-spacing:-.1px;flex:none}
.root{display:flex;align-items:center;gap:6px;height:13px;padding-left:5px}
.root i{width:9px;height:9px;border:1px solid #777;background:linear-gradient(#000,#000) center/5px 1px no-repeat}
.leaf{height:13px;flex:none;padding-left:43px;background:linear-gradient(#000,#000) 30px 0/1px 13px no-repeat,linear-gradient(#000,#000) 30px 6px/11px 1px no-repeat}
.leaf.h{padding-left:44px}
.leaf.sel{background-color:#d2d2d2}
.leaf.last{background-size:1px 7px,11px 1px}
.hscroll{display:flex;align-items:center;height:16px;margin-top:auto;padding:0 7px 0 6px;background:#f2f2f2}
.hscroll i{display:flex;align-items:center;justify-content:center;width:132px;height:14px;margin:0 auto 0 8px;border:1px solid #999;background:linear-gradient(#eee,#c6c6c6)}
.hscroll i b{width:8px;height:6px;background:repeating-linear-gradient(90deg,#555 0 1px,#eee 1px 3px)}
.chead2{height:26px;margin-top:1px;padding:5px 4px 0;border-top:1px solid #888;background:linear-gradient(#c0c0c0,#d6d6d6);flex:none;font-size:11px;letter-spacing:-.55px}
.chead2 i{width:40px;margin:0 auto;border-top:1px dotted #333}
.chead2 b{display:block;margin-top:3px}
.ptable{display:flex;height:140px;margin-left:3px;overflow:hidden;background:#fff;flex:none;letter-spacing:-.15px}
.rows{width:190px}
.row{display:grid;grid-template-columns:100px 90px;height:17px;border-bottom:1px solid #ccc;color:#10109c}
.row span{padding-left:13px;line-height:17px;height:16px;overflow:hidden}
.row span+span{display:flex;align-items:center;padding-left:2px;border-left:1px solid #ccc}
.row.sel{background:#b9b9b9;color:#111}.row.sel span{letter-spacing:-.3px}.row.sel span+span{border:0;padding-left:1px}
.sw{width:15px;height:15px;margin-right:6px;border:1px solid #000;background:#fff}
.small{height:140px;width:17px}.small i{height:84px}
.cfoot{display:flex;align-items:center;height:21px;padding-left:8px}
.cfoot>svg:nth-child(2){margin:0 2px 0 5px}
.stars{display:flex;width:23px;height:18px;padding:2px 1px;border:1px solid #777;border-radius:3px;background:#f2f2f2;margin-right:44px;flex:none}
.cfoot>svg:nth-child(n+5){margin-left:7px}
.az{font:bold 10px "Liberation Sans",sans-serif}.ast{font:14px "Liberation Sans",sans-serif}
.tooltip{position:absolute;left:827px;top:707px;width:183px;height:20px;border:1px solid #777;border-radius:2px;background:linear-gradient(#fff,#e5e7f1);box-shadow:2px 2px 2px #777;color:#555;font:11.5px/18px "Open Sans",sans-serif;letter-spacing:-.1px;text-align:center}
.taskbar{display:flex;height:40px;padding-left:9px;border-top:1px solid #4b5c70;background:linear-gradient(#8b9db3,#7a8ea7);font:12px "Open Sans",sans-serif;letter-spacing:-.42px;color:#fff}
.taskbar>svg{margin-right:12px}
.task{display:flex;align-items:center;gap:2px;width:154.2px;height:38px;margin-right:2.8px;padding-left:9px;border:1px solid #495b70;border-radius:3px;box-shadow:inset 0 0 0 1px #b6c3d1;background:linear-gradient(170deg,#b9c4d1,#97a8bb 45%,#8296ac 50%,#96a8ba);flex:none;text-shadow:0 1px 2px #456}
.task svg{margin-right:2px}
.task.fzt{gap:0}
.task.dbl{width:309px;margin-right:4px;padding:0}
.dbl div{display:flex;align-items:center;width:155px;height:100%;padding-left:11px;gap:2px}
.dbl div.vero{padding-left:7px;border-left:1px solid #8190a3}
.task.blue{background:linear-gradient(170deg,#89a5c4,#4e7aa9 45%,#2e5e95 50%,#5b87b6)}
.task.light{background:linear-gradient(170deg,#dde1e6,#c4ccd5 45%,#b2bdca 50%,#c9d1da)}
.fz{font:italic bold 23px "Liberation Sans",sans-serif;fill:#fff}
.fz2{font-size:19px}
text.app{font:bold 18px "Open Sans",sans-serif;letter-spacing:-1px}
text.app{height:auto;border:0}
.ps{fill:#5ccdfb}.dwt{fill:#d7f05f}
.tray{display:grid;grid-template-columns:18px 24px 24px 25px 24px 1fr;align-items:center;width:188px;padding-left:8px;font-size:11.5px}
.clock{text-align:center;line-height:17px;letter-spacing:-.3px}
.desk{width:16px;margin-left:auto;border:1px solid #4d6075;background:linear-gradient(135deg,#6d829a,#a6b4c5)}
```
